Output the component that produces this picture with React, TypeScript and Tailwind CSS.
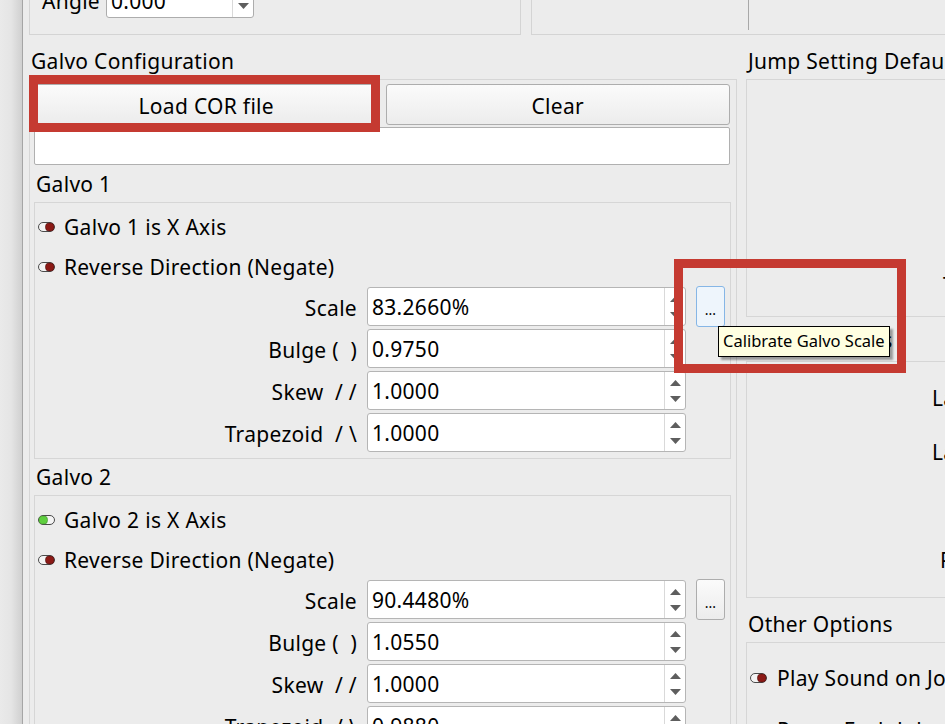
import React from "react";

function Toggle({ on }: { on?: boolean }) {
  return (
    <svg width="17" height="10" viewBox="0 0 17 10" className="shrink-0">
      <rect x="0.5" y="0.5" width="16" height="9" rx="4.5" fill="#f4f4f4" stroke="#4a4a4a" />
      {on ? (
        <rect x="1" y="1" width="8.5" height="8" rx="3.5" fill="#5fcf3f" stroke="#3f8f2a" strokeWidth="0.6" />
      ) : (
        <rect x="7.5" y="1" width="8.5" height="8" rx="3.5" fill="#8c1a16" stroke="#4a0d0b" strokeWidth="0.6" />
      )}
    </svg>
  );
}

function Up() {
  return (
    <svg width="11" height="6" viewBox="0 0 11 6">
      <path d="M5.5 0 L11 6 L0 6 Z" fill="#5e5e5e" />
    </svg>
  );
}

function Down() {
  return (
    <svg width="11" height="6" viewBox="0 0 11 6">
      <path d="M0 0 L11 0 L5.5 6 Z" fill="#5e5e5e" />
    </svg>
  );
}

function Spin({ value }: { value: string }) {
  return (
    <div className="flex h-[39px] w-[319px] shrink-0 overflow-hidden rounded-[3px] border border-[#b5b5b5] bg-white">
      <div className="flex flex-1 items-center pl-[4px] pt-[1px] leading-none text-black">{value}</div>
      <div className="flex w-[21px] flex-col items-center justify-between border-l border-[#d9d9d9] pb-[7px] pt-[8px]">
        <Up />
        <Down />
      </div>
    </div>
  );
}

function Dots({ hover }: { hover?: boolean }) {
  return hover ? (
    <div className="flex h-[41px] w-[29px] items-end justify-center rounded-[3px] border border-[#86b6e6] bg-[#eef5fc] pb-[9px] text-[14px] leading-none tracking-normal text-black">
      ...
    </div>
  ) : (
    <div className="flex h-[41px] w-[29px] items-end justify-center rounded-[3px] border border-[#adadad] bg-gradient-to-b from-[#fbfbfb] to-[#ececec] pb-[9px] text-[14px] leading-none tracking-normal text-black">
      ...
    </div>
  );
}

function FormRow({ label, value, dots, hover }: { label: string; value: string; dots?: boolean; hover?: boolean }) {
  return (
    <div className="flex h-[39px] items-center">
      <div className="flex-1 whitespace-pre pr-[10px] pt-[2px] text-right leading-[28px]">{label}</div>
      <Spin value={value} />
      <div className="ml-[10px] w-[29px] shrink-0">{dots ? <Dots hover={hover} /> : null}</div>
    </div>
  );
}

function ToggleRow({ on, text }: { on?: boolean; text: string }) {
  return (
    <div className="flex h-[40px] items-center gap-[9px] pl-[3px]">
      <Toggle on={on} />
      <span className="leading-[28px]">{text}</span>
    </div>
  );
}

function Galvo({
  n,
  on,
  values,
  hover,
}: {
  n: number;
  on?: boolean;
  values: string[];
  hover?: boolean;
}) {
  return (
    <div className="border border-[#d6d6d6] pb-[6px] pr-[5px] pt-[4px]">
      <ToggleRow on={on} text={`Galvo ${n} is X Axis`} />
      <ToggleRow text="Reverse Direction (Negate)" />
      <div className="flex flex-col gap-[3px]">
        <FormRow label="Scale" value={values[0]} dots hover={hover} />
        <FormRow label="Bulge (  )" value={values[1]} />
        <FormRow label="Skew  / /" value={values[2]} />
        <FormRow label={"Trapezoid  / \\"} value={values[3]} />
      </div>
    </div>
  );
}

export default function App() {
  return (
    <div className="relative flex h-[724px] w-[945px] overflow-hidden bg-[#ececec] font-['Noto_Sans',sans-serif] text-[21px] tracking-[0.3px] text-black">
      {/* left strip */}
      <div className="h-full w-[23px] shrink-0 border-r border-[#a5a5a5] bg-gradient-to-r from-[#eaeaea] via-[#e5e5e5] to-[#d0d0d0]" />

      <div className="flex min-w-0 flex-1 flex-col">
        {/* top row (cut off) */}
        <div className="flex h-[35px] shrink-0 pl-[6px]">
          <div className="flex h-[35px] w-[492px] shrink-0 items-end border-x border-b border-[#d4d4d4] pb-[16px]">
            <div className="flex h-[34px] items-center">
              <div className="w-[76px] pr-[6px] text-right leading-[28px]">Angle</div>
              <div className="flex h-[34px] w-[148px] overflow-hidden rounded-[3px] border border-[#adadad] bg-white">
                <div className="flex flex-1 items-center pl-[4px] leading-none">0.000</div>
                <div className="flex w-[21px] items-end justify-center border-l border-[#d9d9d9] pb-[8px]">
                  <Down />
                </div>
              </div>
            </div>
          </div>
          <div className="ml-[10px] flex h-[35px] flex-1 border-b border-l border-[#d4d4d4]">
            <div className="ml-[216px] h-[30px] w-px bg-[#a8a8a8]" />
          </div>
        </div>

        {/* columns */}
        <div className="flex gap-[9px] pl-[6px]">
          {/* left column */}
          <div className="w-[708px] shrink-0">
            <div className="flex h-[44px] items-end whitespace-nowrap pb-[4px] pl-[2px] leading-[28px]">Galvo Configuration</div>
            <div className="border border-[#d6d6d6] pl-[4px] pr-[5px] pt-[4px]">
              <div className="grid h-[41px] grid-cols-2 gap-[7px] pr-[1px]">
                <div className="flex items-center justify-center rounded-[3px] border border-[#adadad] bg-gradient-to-b from-[#fbfbfb] to-[#ececec] pt-[5px]">
                  Load COR file
                </div>
                <div className="flex items-center justify-center rounded-[3px] border border-[#adadad] bg-gradient-to-b from-[#fbfbfb] to-[#ececec] pt-[5px]">
                  Clear
                </div>
              </div>
              <div className="mr-[1px] mt-[2px] h-[38px] rounded-[2px] border border-[#b0b0b0] bg-white" />
              <div className="flex h-[37px] items-end pb-[4px] pl-[2px] leading-[28px]">Galvo 1</div>
              <Galvo n={1} values={["83.2660%", "0.9750", "1.0000", "1.0000"]} hover />
              <div className="flex h-[36px] items-end pb-[4px] pl-[2px] leading-[28px]">Galvo 2</div>
              <Galvo n={2} on values={["90.4480%", "1.0550", "1.0000", "0.9880"]} />
            </div>
          </div>

          {/* right column */}
          <div className="w-[400px] shrink-0">
            <div className="flex h-[44px] items-end whitespace-nowrap pb-[4px] pl-[2px] leading-[28px]">
              Jump Setting Defaults
            </div>
            <div className="h-[238px] border border-[#d6d6d6]">
              <div className="whitespace-nowrap pl-[196px] pt-[191px] leading-[28px]">Travel Speed</div>
            </div>
            <div className="flex h-[44px] items-end whitespace-nowrap pb-[7px] pl-[2px] leading-[28px]">
              Delay Settings
            </div>
            <div className="h-[237px] border border-[#d6d6d6]">
              <div className="whitespace-nowrap pl-[185px] pt-[22px] leading-[28px]">Laser On Delay</div>
              <div className="mt-[26px] whitespace-nowrap pl-[185px] leading-[28px]">Laser Off Delay</div>
              <div className="mt-[80px] whitespace-nowrap pl-[193px] leading-[28px]">Polygon Delay</div>
            </div>
            <div className="flex h-[44px] items-end whitespace-nowrap pb-[4px] pl-[2px] leading-[28px]">
              Other Options
            </div>
            <div className="h-[200px] border border-[#d6d6d6] pt-[9px]">
              <div className="flex h-[52px] items-center gap-[10px] pl-[3px]">
                <Toggle />
                <span className="whitespace-nowrap leading-[28px]">Play Sound on Job Complete</span>
              </div>
              <div className="flex h-[52px] items-center gap-[10px] pl-[3px]">
                <Toggle />
                <span className="whitespace-nowrap leading-[28px]">Pause Each Job</span>
              </div>
            </div>
          </div>
        </div>
      </div>

      {/* tooltip */}
      <div className="absolute left-[718px] top-[326px] flex h-[31px] w-[172px] items-center whitespace-nowrap border border-black bg-[#ffffe1] pl-[4px] text-[16.5px] leading-none tracking-normal shadow-[3px_3px_2px_rgba(0,0,0,0.35)]">
        Calibrate Galvo Scale
      </div>

      {/* annotation rectangles */}
      <div className="absolute left-[29px] top-[75px] h-[57px] w-[351px] border-[9px] border-[#c53a31]" />
      <div className="absolute left-[674px] top-[259px] h-[114px] w-[232px] border-[9px] border-[#c53a31]" />
    </div>
  );
}
